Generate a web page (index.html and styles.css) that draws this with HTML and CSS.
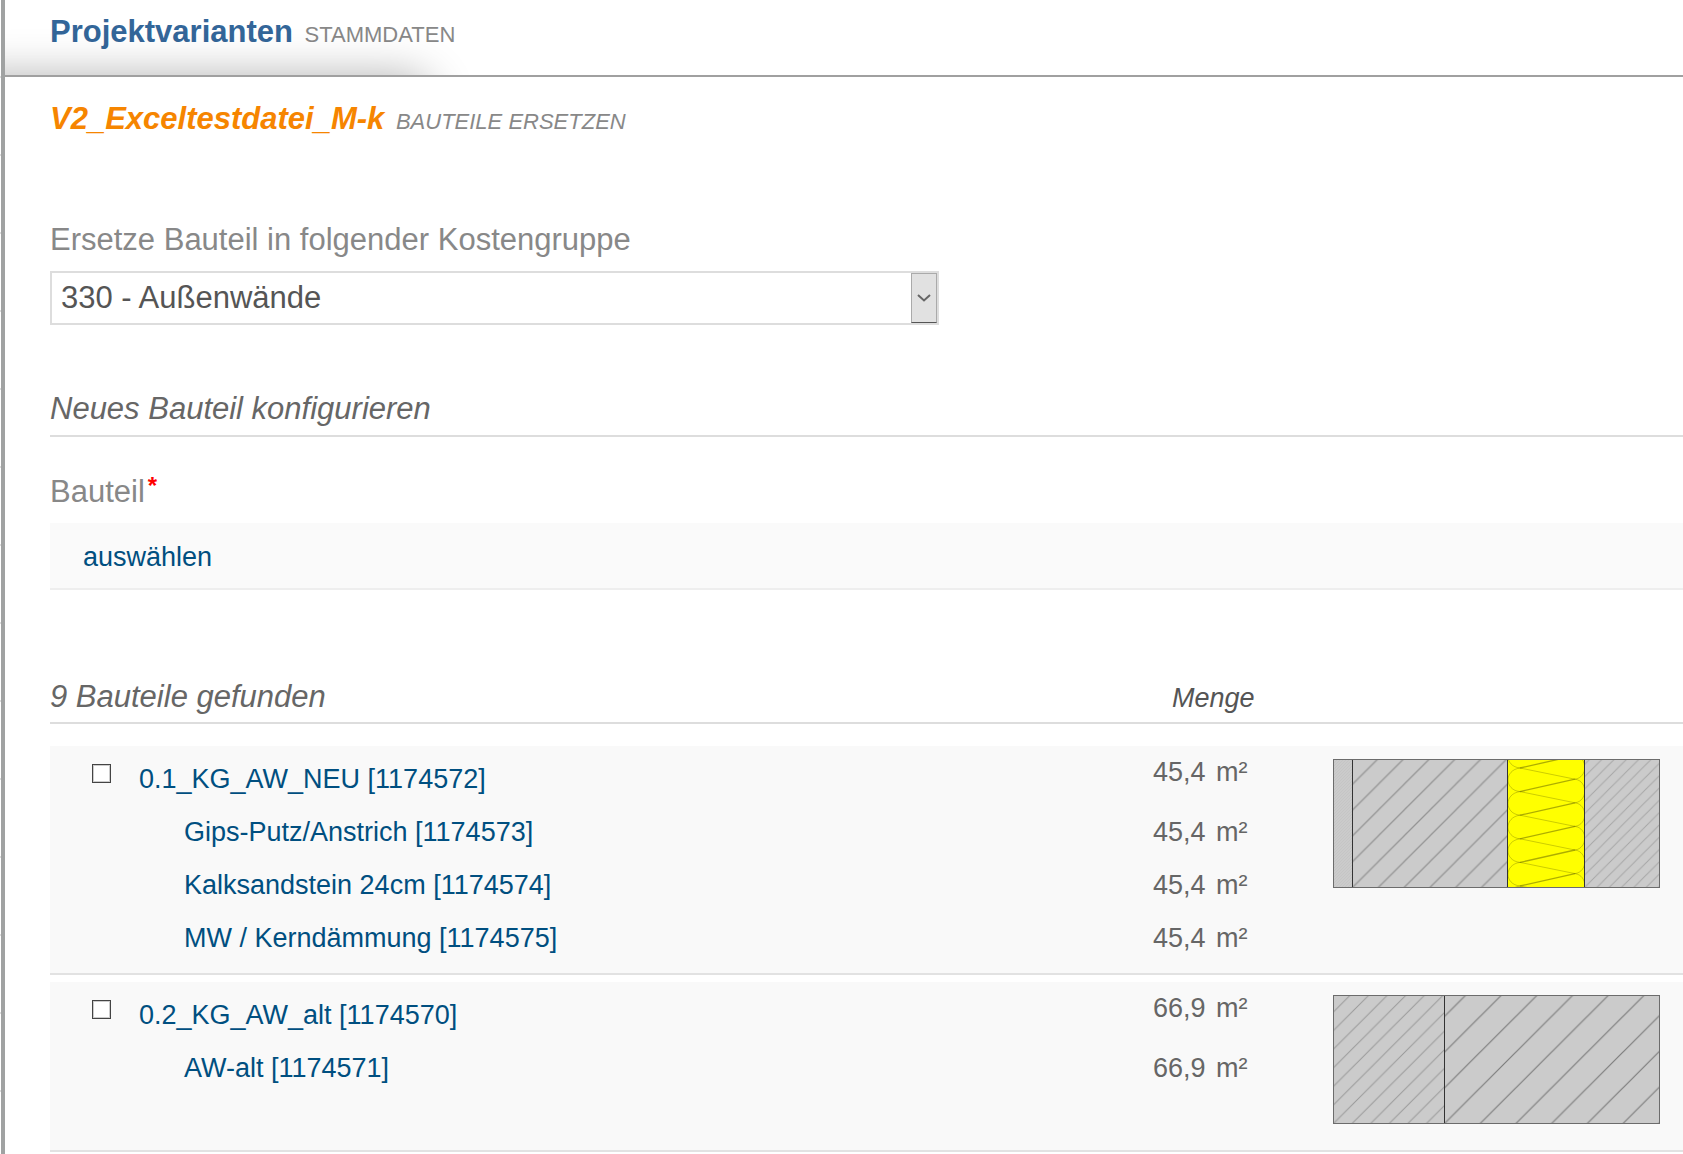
FILE: index.html
```html
<!DOCTYPE html>
<html lang="de">
<head>
<meta charset="UTF-8">
<meta name="viewport" content="width=device-width, initial-scale=1.0">
<title>Projektvarianten</title>
<link rel="stylesheet" href="styles.css">
</head>
<body>

<div class="sidebar"></div>

<main class="content">
  <header class="page-header">
    <h1>Projektvarianten <span class="subtitle">STAMMDATEN</span></h1>
  </header>

  <div class="inner">
    <h2>V2_Exceltestdatei_M-k <span class="subtitle">BAUTEILE ERSETZEN</span></h2>

    <form>
      <!-- Kostengruppe -->
      <label class="field-label" for="costGroup">Ersetze Bauteil in folgender Kostengruppe</label>
      <div class="select-box">
        <select id="costGroup">
          <option>330 - Außenwände</option>
        </select>
        <span class="select-arrow">
          <svg width="14" height="8" viewBox="0 0 14 8"><path d="M1 1l6 5.5L13 1" fill="none" stroke="#666" stroke-width="2"/></svg>
        </span>
      </div>

      <!-- Neues Bauteil -->
      <h3 class="section-title">Neues Bauteil konfigurieren</h3>
      <p class="field-label">Bauteil<span class="required">*</span></p>
      <div class="picker"><a href="#">auswählen</a></div>

      <!-- Gefundene Bauteile -->
      <div class="section-title results-title">
        <h3>9 Bauteile gefunden</h3>
        <span class="col-amount">Menge</span>
      </div>

      <div class="element">
        <input type="checkbox" id="el1174572" aria-label="0.1_KG_AW_NEU">
        <ul class="components">
          <li class="main"><a href="#">0.1_KG_AW_NEU [1174572]</a><span class="amount">45,4 <span>m²</span></span></li>
          <li><a href="#">Gips-Putz/Anstrich [1174573]</a><span class="amount">45,4 <span>m²</span></span></li>
          <li><a href="#">Kalksandstein 24cm [1174574]</a><span class="amount">45,4 <span>m²</span></span></li>
          <li><a href="#">MW / Kerndämmung [1174575]</a><span class="amount">45,4 <span>m²</span></span></li>
        </ul>
        <div class="layers">
          <svg width="327" height="129" viewBox="0 0 327 129">
            <defs>
              <pattern id="plaster" x="0" y="128" width="3" height="3" patternUnits="userSpaceOnUse">
                <path d="M0 3L3 0" stroke="#bfbfbf" stroke-width=".5"/>
              </pattern>
              <pattern id="masonry" x="19.5" y="128.5" width="25.8" height="25.8" patternUnits="userSpaceOnUse">
                <path d="M-1 26.8L26.8 -1M-1 1L1 -1M24.8 26.8L26.8 24.8" stroke="#959595" stroke-width="1.3"/>
              </pattern>
              <pattern id="facing" x="251.5" y="128.5" width="12.3" height="12.3" patternUnits="userSpaceOnUse">
                <path d="M-1 13.3L13.3 -1M-1 1L1 -1M11.3 13.3L13.3 11.3" stroke="#a6a6a6" stroke-width="1"/>
              </pattern>
              <clipPath id="woolClip"><rect x="174" y="0" width="78" height="129"/></clipPath>
              <g id="wool" fill="none" stroke="#000">
                <path d="M187 9C171 11 171 31 187 32.6M242 20.2C255 22 255 42 242 43.8M187 9L242 20.2" stroke-opacity=".2"/>
                <path d="M187 32.6L242 20.2" stroke-opacity=".32" stroke-width="1.3"/>
              </g>
            </defs>
            <rect width="327" height="129" fill="#cbcbcb"/>
            <rect width="19" height="129" fill="url(#plaster)"/>
            <rect x="19" width="155" height="129" fill="url(#masonry)"/>
            <rect x="251" width="76" height="129" fill="url(#facing)"/>
            <rect x="174" width="77" height="129" fill="#ff0"/>
            <g clip-path="url(#woolClip)">
              <use href="#wool" y="-47.2"/>
              <use href="#wool" y="-23.6"/>
              <use href="#wool"/>
              <use href="#wool" y="23.6"/>
              <use href="#wool" y="47.2"/>
              <use href="#wool" y="70.8"/>
              <use href="#wool" y="94.4"/>
              <use href="#wool" y="118"/>
            </g>
            <path d="M19.5 0V129M174.5 0V129M251.5 0V129" stroke="#333"/>
            <rect x=".5" y=".5" width="326" height="128" fill="none" stroke="#6c6c6c"/>
          </svg>
        </div>
      </div>

      <div class="element">
        <input type="checkbox" id="el1174570" aria-label="0.2_KG_AW_alt">
        <ul class="components">
          <li class="main"><a href="#">0.2_KG_AW_alt [1174570]</a><span class="amount">66,9 <span>m²</span></span></li>
          <li><a href="#">AW-alt [1174571]</a><span class="amount">66,9 <span>m²</span></span></li>
        </ul>
        <div class="layers">
          <svg width="327" height="129" viewBox="0 0 327 129">
            <defs>
              <pattern id="hatchNarrow" x=".5" y="128.5" width="18.6" height="18.6" patternUnits="userSpaceOnUse">
                <path d="M-1 19.6L19.6 -1M-1 1L1 -1M17.6 19.6L19.6 17.6" stroke="#999" stroke-width="1"/>
              </pattern>
              <pattern id="hatchWide" x="111.5" y="128.5" width="35.7" height="35.7" patternUnits="userSpaceOnUse">
                <path d="M-1 36.7L36.7 -1M-1 1L1 -1M34.7 36.7L36.7 34.7" stroke="#7c7c7c" stroke-width="1.2"/>
              </pattern>
            </defs>
            <rect width="327" height="129" fill="#cbcbcb"/>
            <rect width="111" height="129" fill="url(#hatchNarrow)"/>
            <rect x="111" width="216" height="129" fill="url(#hatchWide)"/>
            <path d="M111.5 0V129" stroke="#333"/>
            <rect x=".5" y=".5" width="326" height="128" fill="none" stroke="#6c6c6c"/>
          </svg>
        </div>
      </div>
    </form>
  </div>
</main>

</body>
</html>
```
FILE: styles.css
```css
* {
  box-sizing: border-box;
}

body {
  display: flex;
  min-height: 100vh;
  margin: 0;
  background: #fff;
  color: #666;
  font-family: "Liberation Sans", Arial, sans-serif;
  font-size: 27px;
  line-height: 53px;
}

h1, h2, h3, p, ul {
  margin: 0;
  padding: 0;
}

a {
  color: #004f80;
  text-decoration: none;
}

a:hover {
  text-decoration: underline;
}

/* edge of the navigation column */
.sidebar {
  width: 1px;
  background: repeating-linear-gradient(#fff 0, #fff 76px, #ddd 76px, #ddd 78px);
}

.content {
  flex: 1;
  min-width: 0;
  border-left: 4px solid #a0a2a2;
}

/* header */
.page-header {
  position: relative;
  overflow: hidden;
  padding: 14px 45px 25px;
  border-bottom: 2px solid #a0a0a0;
}

.page-header::after {
  content: "";
  position: absolute;
  top: 100%;
  left: -60px;
  width: 488px;
  height: 60px;
  border-radius: 30px;
  box-shadow: 0 0 44px rgba(0, 0, 0, 0.3);
}

h1, h2 {
  font-size: 31px;
  line-height: 36px;
}

h1 {
  color: #336699;
}

h2 {
  color: #f68500;
  font-style: italic;
}

.subtitle {
  margin-left: 3px;
  color: #888;
  font-size: 22px;
  font-weight: normal;
  line-height: 1;
}

.inner {
  padding: 24px 0 0 45px;
}

/* form */
form {
  padding-top: 85px;
}

.field-label {
  display: block;
  margin-bottom: 13px;
  color: #888;
  font-size: 31px;
  line-height: 36px;
}

.required {
  margin-left: 3px;
  color: #f00;
  font-size: 24px;
  font-weight: bold;
  line-height: 1;
  vertical-align: text-top;
}

.select-box {
  position: relative;
  max-width: 889px;
  margin-bottom: 66px;
}

.select-box select {
  display: block;
  width: 100%;
  height: 54px;
  padding: 0 40px 2px 9px;
  border: 2px solid #ddd;
  border-radius: 0;
  background: #fff;
  color: #555;
  font-family: inherit;
  font-size: 31px;
  appearance: none;
}

.select-arrow {
  position: absolute;
  top: 2px;
  right: 2px;
  bottom: 2px;
  display: flex;
  align-items: center;
  justify-content: center;
  width: 26px;
  border: 1px solid #aaa;
  border-bottom-color: #555;
  background: #e1e1e1;
  pointer-events: none;
}

.section-title {
  margin-bottom: 37px;
  padding-bottom: 8px;
  border-bottom: 2px solid #ddd;
  font-size: 31px;
  font-style: italic;
  font-weight: normal;
  line-height: 36px;
}

.picker {
  padding: 8px 33px 4px;
  border-bottom: 2px solid #eee;
  background: #fafafa;
}

/* results */
.results-title {
  display: flex;
  align-items: baseline;
  margin-top: 89px;
  margin-bottom: 22px;
  padding-bottom: 7px;
}

.results-title h3 {
  flex: 1;
  font-size: 31px;
  font-weight: normal;
}

.col-amount {
  width: 511px;
  color: #555;
  font-size: 27px;
  line-height: 1;
}

.element {
  display: flex;
  align-items: flex-start;
  margin-bottom: 7px;
  padding-left: 42px;
  border-bottom: 2px solid #e2e2e2;
  background: #f9f9f9;
}

.element input {
  width: 19px;
  height: 19px;
  margin: 18px 28px 0 0;
  border: 1px solid #444;
  outline: 1px solid #ccc;
  outline-offset: -2px;
  background: #fff;
  appearance: none;
}

.element input:checked {
  background: #336699;
}

.components {
  flex: 1;
  padding: 7px 0 8px;
  list-style: none;
}

.components li {
  display: flex;
  align-items: flex-start;
  justify-content: space-between;
  padding-left: 45px;
}

.components .main {
  padding-left: 0;
}

.amount {
  width: 180px;
}

.amount span {
  margin-left: 3px;
}

/* amount of the whole element sits a little above its name */
.main .amount {
  line-height: 39px;
}

.layers {
  width: 350px;
  padding: 13px 0 26px;
}

.layers svg {
  display: block;
}
```
